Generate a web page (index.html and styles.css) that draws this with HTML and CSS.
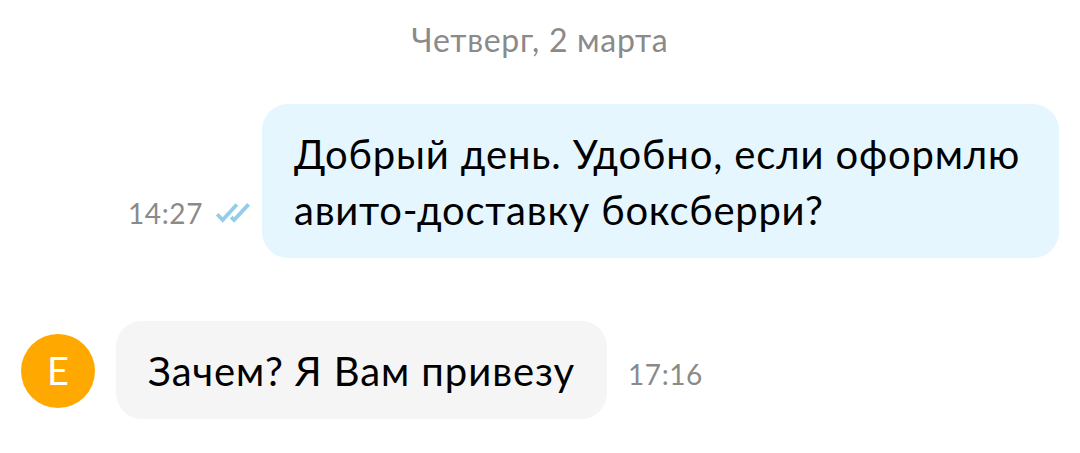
FILE: index.html
```html
<!DOCTYPE html>
<html lang="ru">
<head>
<meta charset="utf-8">
<title>Чат</title>
<link rel="stylesheet" href="styles.css">
</head>
<body>
<main class="chat">
  <div class="date">Четверг, 2 марта</div>
  <div class="row row-out">
    <div class="meta">
      <time class="time">14:27</time>
      <svg class="ticks" width="36" height="22" viewBox="0 0 36 22"><path d="M2.2 12.2l5.5 5.8L21.8 2.4M16.2 15.2l2.9 2.8L33.6 2.4"/></svg>
    </div>
    <div class="bubble bubble-out">Добрый день. Удобно, если оформлю<br><span class="line-tight">авито-доставку боксберри?</span></div>
  </div>
  <div class="row row-in">
    <div class="avatar">Е</div>
    <div class="bubble bubble-in">Зачем? Я Вам привезу</div>
    <time class="time time-in">17:16</time>
  </div>
</main>
</body>
</html>
```
FILE: styles.css
```css
body {
  margin: 0;
  background: #fff;
  font-family: Lato, "Noto Sans", sans-serif;
}
.chat {
  width: 1080px;
  height: 453px;
  overflow: hidden;
}
.date {
  height: 104px;
  padding-top: 19px;
  box-sizing: border-box;
  text-align: center;
  font-size: 32px;
  line-height: 42px;
  letter-spacing: 0.7px;
  color: #8a8a8a;
}
.row {
  display: flex;
}
.row-out {
  justify-content: flex-end;
  padding-right: 21px;
  height: 154px;
}
.bubble {
  box-sizing: border-box;
  border-radius: 26px;
  padding: 22px 32px;
  font-size: 40px;
  line-height: 56px;
  letter-spacing: 0.85px;
  color: #000;
  white-space: nowrap;
}
.bubble-out {
  width: 797px;
  background: #e5f6ff;
}
.line-tight {
  letter-spacing: 0.76px;
}
.bubble-in {
  width: 491px;
  height: 98px;
  background: #f5f5f5;
  letter-spacing: 0.95px;
}
.meta {
  display: flex;
  align-items: center;
  height: 34px;
  margin: 92px 11px 0 0;
}
.time {
  font-size: 28px;
  line-height: 34px;
  letter-spacing: 0.6px;
  color: #8a8a8a;
}
.ticks {
  margin-left: 12px;
  fill: none;
  stroke: #93cdec;
  stroke-width: 3.8;
}
.row-in {
  margin-top: 63px;
  padding-left: 21px;
}
.avatar {
  width: 74px;
  height: 74px;
  margin: 13px 21px 0 0;
  border-radius: 50%;
  background: #ffa800;
  color: #fff;
  font-size: 38px;
  line-height: 73px;
  text-align: center;
}
.time-in {
  margin: 36px 0 0 21px;
}
```
